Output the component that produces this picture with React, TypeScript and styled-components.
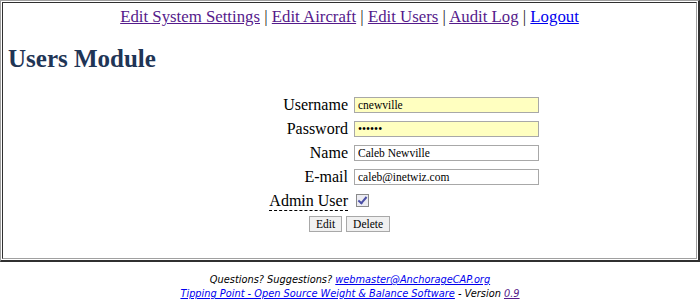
import React from "react";
import styled, { createGlobalStyle } from "styled-components";

const Global = createGlobalStyle`
  html, body { margin: 0; padding: 0; background: #ffffff; }
  body { font-family: "Liberation Serif", serif; color: #000; }
`;

const Frame = styled.div`
  border: 1px solid;
  border-color: #a0a0a0 #303030 #303030 #a0a0a0;
  border-right-width: 2px;
  border-bottom-width: 2px;
  padding: 1px;
  box-sizing: border-box;
  height: 262px;
`;

const Cell = styled.div`
  border: 1px solid;
  border-color: #303030 #a0a0a0 #a0a0a0 #303030;
  height: 100%;
  box-sizing: border-box;
  padding: 4px 4px 0 4px;
`;

const Nav = styled.nav`
  text-align: center;
  font-size: 16.8px;
  line-height: 20px;
  color: #222;
`;

const NavLink = styled.a<{ $visited?: boolean }>`
  color: ${(p) => (p.$visited ? "#551a8b" : "#0000ee")};
  text-decoration: underline;
`;

const Heading = styled.h1`
  margin: 17px 0 0 1px;
  font-size: 25px;
  line-height: 30px;
  font-weight: bold;
  color: #1f3556;
`;

const Form = styled.form`
  display: grid;
  grid-template-columns: 341px 185px 1fr;
  column-gap: 6px;
  row-gap: 8px;
  margin-top: 23px;
  align-items: center;
`;

const Label = styled.label<{ $abbr?: boolean }>`
  grid-column: 1;
  justify-self: end;
  font-size: 16px;
  line-height: 16px;
  white-space: nowrap;
  ${(p) => (p.$abbr ? "border-bottom: 1px dashed #000; padding-bottom: 1px;" : "")}
`;

const Input = styled.input<{ $required?: boolean }>`
  grid-column: 2;
  box-sizing: border-box;
  width: 185px;
  height: 16px;
  margin: 0;
  padding: 0 3px;
  border: 1px solid #a8a8a8;
  background: ${(p) => (p.$required ? "#ffffc0" : "#ffffff")};
  font-family: "Liberation Serif", serif;
  font-size: 11.5px;
  color: #000;
  outline: none;
`;

const Check = styled.input`
  grid-column: 2;
  justify-self: start;
  align-self: start;
  appearance: none;
  -webkit-appearance: none;
  box-sizing: border-box;
  width: 13px;
  height: 13px;
  margin: 1px 0 0 2px;
  border: 1px solid #8a8a8a;
  background: #ececf2;
  position: relative;
  &:checked::after {
    content: "";
    position: absolute;
    left: 3px;
    top: 0px;
    width: 3px;
    height: 7px;
    border: solid #4b4fa6;
    border-width: 0 2px 2px 0;
    transform: rotate(40deg);
  }
`;

const Buttons = styled.div`
  grid-column: 1 / -1;
  display: flex;
  justify-content: center;
  gap: 4px;
  margin-top: -3px;
`;

const Button = styled.button`
  height: 16px;
  padding: 0 6px;
  border: 1px solid #a8a8a8;
  background: #f0f0f0;
  font-family: "Liberation Serif", serif;
  font-size: 11.5px;
  line-height: 14px;
  color: #000;
`;

const Footer = styled.footer`
  text-align: center;
  font-family: "DejaVu Sans", Verdana, sans-serif;
  font-style: italic;
  font-size: 9.8px;
  line-height: 14px;
  margin-top: 11px;
`;

const FootLink = styled.a<{ $visited?: boolean }>`
  color: ${(p) => (p.$visited ? "#551a8b" : "#0000ee")};
  text-decoration: underline;
`;

export default function App() {
  return (
    <>
      <Global />
      <Frame>
        <Cell>
          <Nav>
            <NavLink $visited href="#">Edit System Settings</NavLink> |{" "}
            <NavLink $visited href="#">Edit Aircraft</NavLink> |{" "}
            <NavLink $visited href="#">Edit Users</NavLink> |{" "}
            <NavLink $visited href="#">Audit Log</NavLink> |{" "}
            <NavLink href="#">Logout</NavLink>
          </Nav>
          <Heading>Users Module</Heading>
          <Form onSubmit={(e) => e.preventDefault()}>
            <Label htmlFor="u">Username</Label>
            <Input id="u" $required defaultValue="cnewville" />
            <Label htmlFor="p">Password</Label>
            <Input id="p" $required type="password" defaultValue="secret" />
            <Label htmlFor="n">Name</Label>
            <Input id="n" defaultValue="Caleb Newville" />
            <Label htmlFor="e">E-mail</Label>
            <Input id="e" defaultValue="caleb@inetwiz.com" />
            <Label $abbr htmlFor="a">Admin User</Label>
            <Check id="a" type="checkbox" defaultChecked />
            <Buttons>
              <Button type="button">Edit</Button>
              <Button type="button">Delete</Button>
            </Buttons>
          </Form>
        </Cell>
      </Frame>
      <Footer>
        <div>
          Questions? Suggestions? <FootLink href="#">webmaster@AnchorageCAP.org</FootLink>
        </div>
        <div>
          <FootLink href="#">Tipping Point - Open Source Weight &amp; Balance Software</FootLink> - Version{" "}
          <FootLink $visited href="#">0.9</FootLink>
        </div>
      </Footer>
    </>
  );
}
